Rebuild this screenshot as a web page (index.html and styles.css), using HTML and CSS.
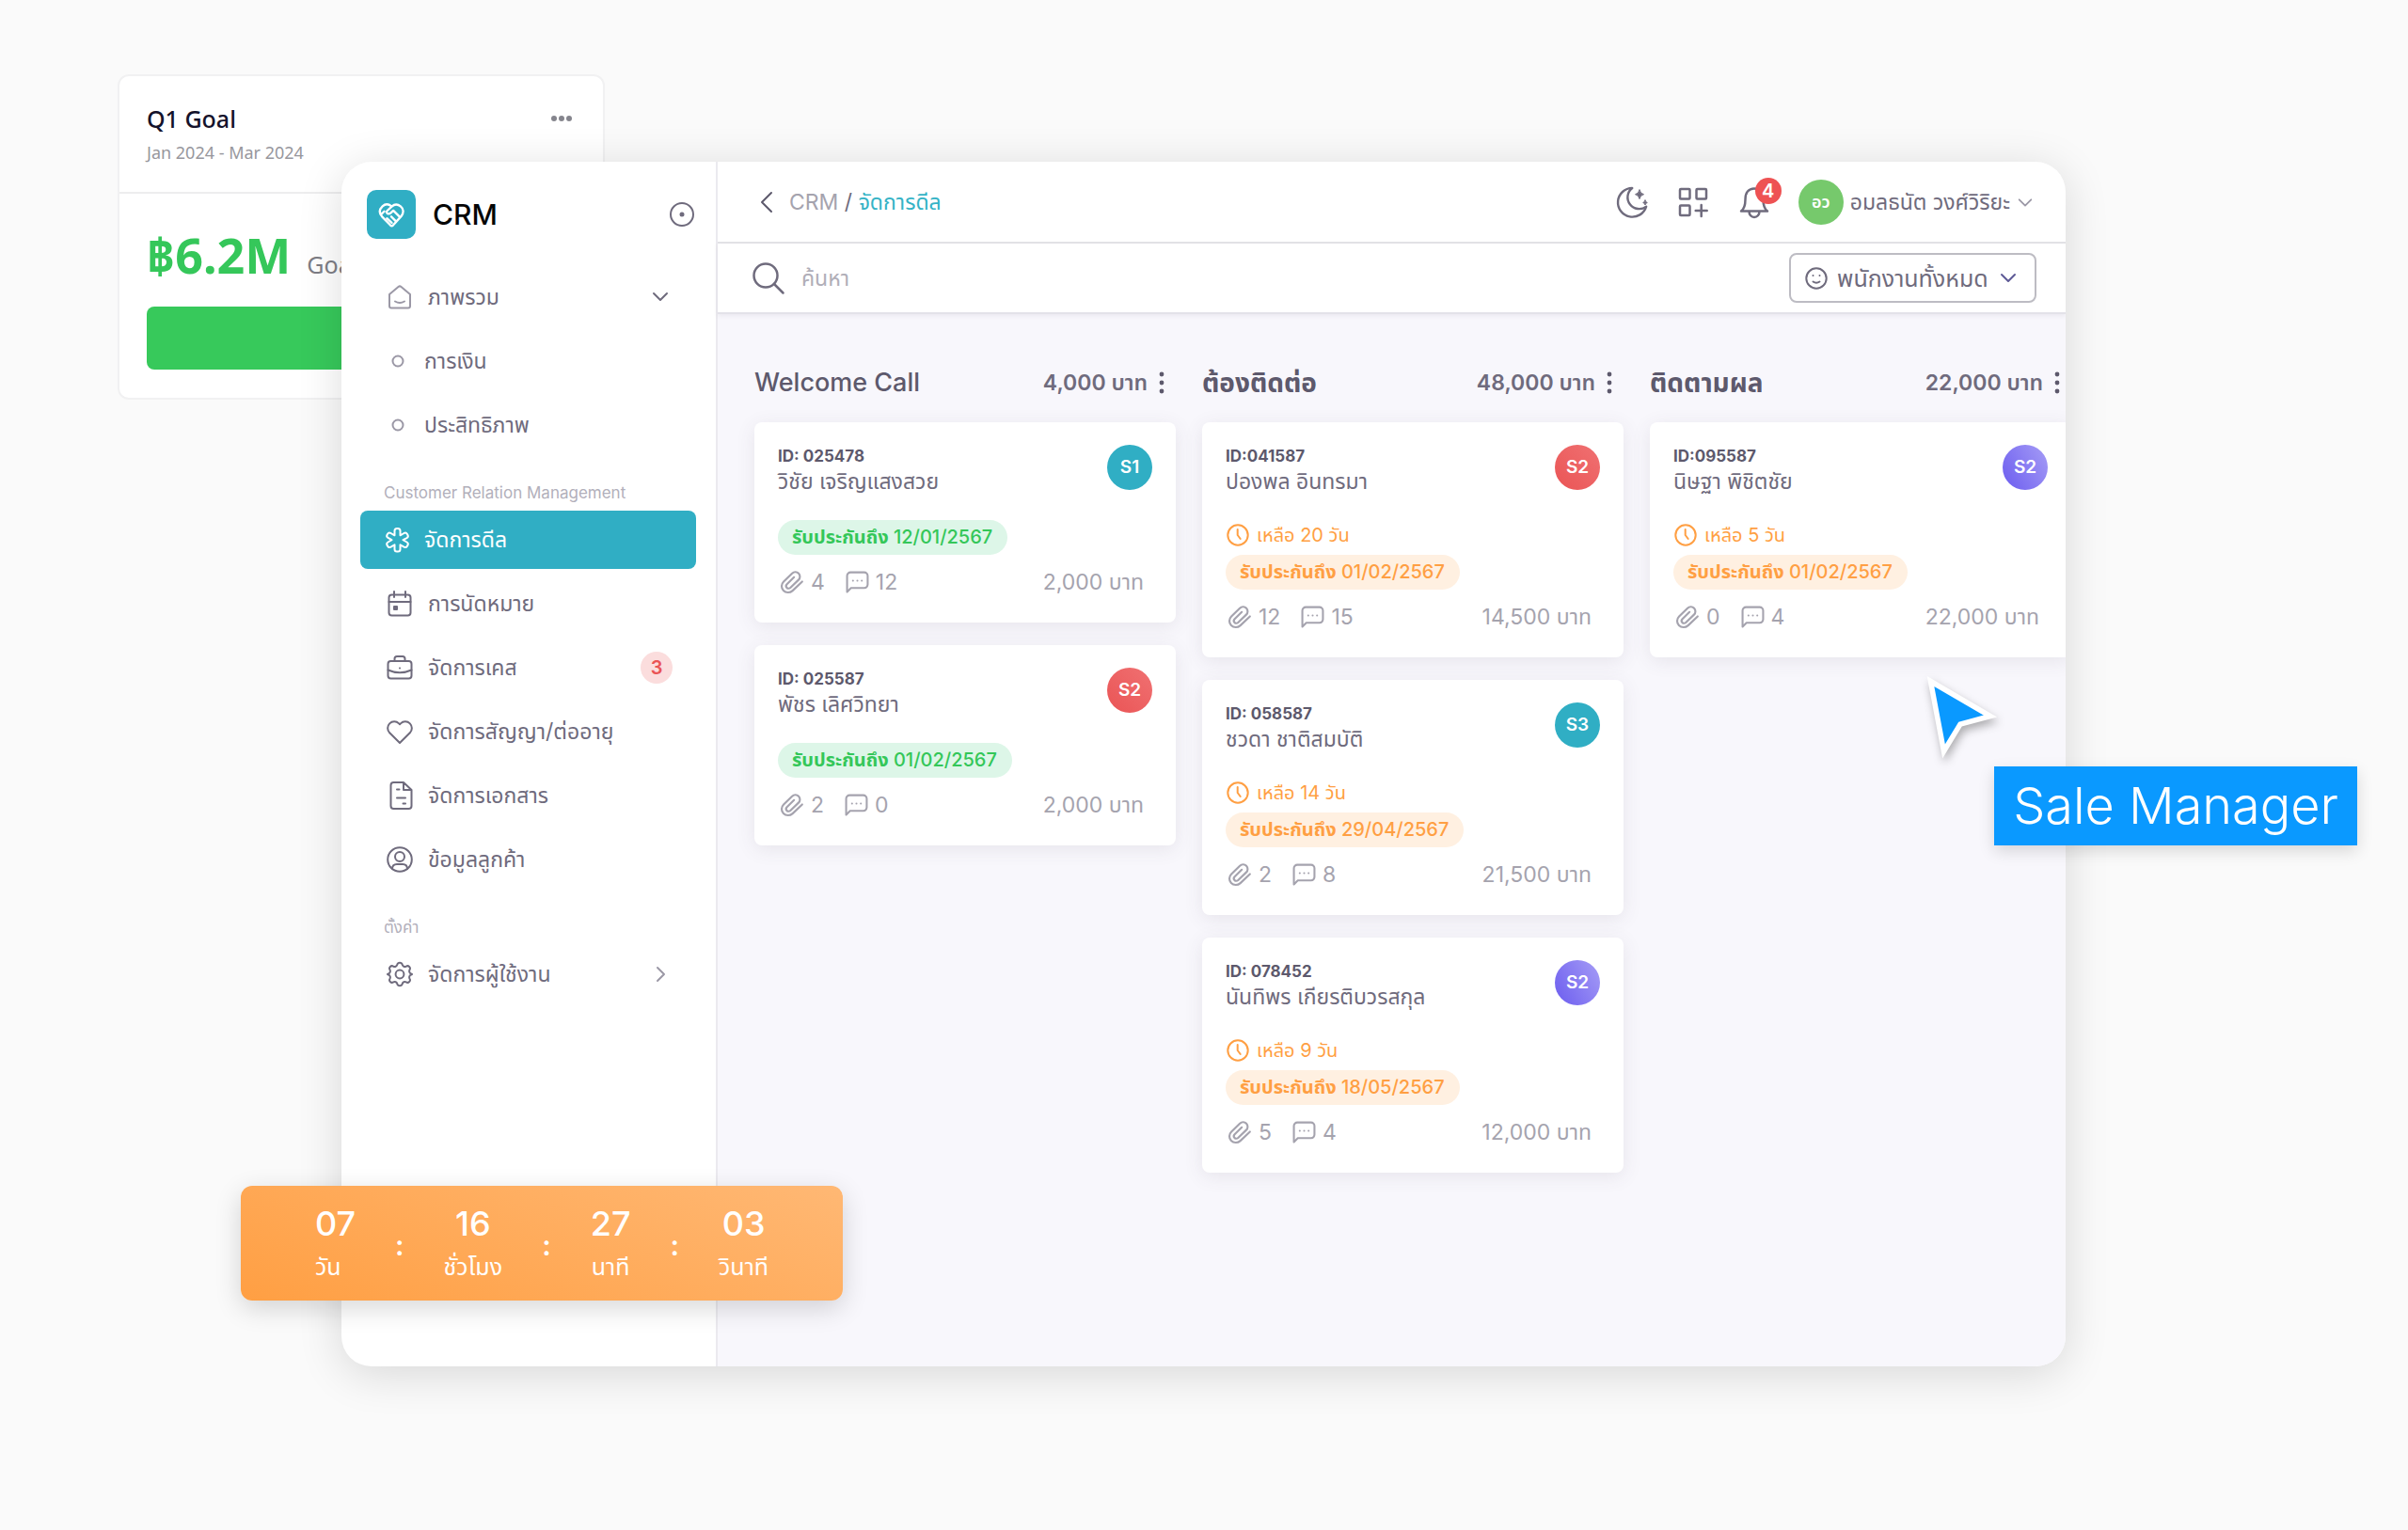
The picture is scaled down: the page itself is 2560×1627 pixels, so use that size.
FILE: index.html
```html
<!DOCTYPE html>
<html lang="th">
<head>
<meta charset="utf-8">
<meta name="viewport" content="width=device-width, initial-scale=1">
<title>CRM - จัดการดีล</title>
<link rel="stylesheet" href="styles.css">
</head>
<body>
<svg class="sprite" aria-hidden="true">
  <symbol id="i-clip" viewBox="0 0 24 24"><path d="M22 11.5 12.6 20.4c-2.6 2.4-6.6 2.4-9-.1s-2.300-6.300.2-8.800l8.300-8.100c1.800-1.700 4.700-1.700 6.400.1s1.700 4.600-.1 6.300l-8 7.700c-1 1-2.600 1-3.500 0s-.9-2.500.1-3.500l7-6.800" /></symbol>
  <symbol id="i-chat" viewBox="0 0 24 24"><path d="M1.500 22V5.500a3.500 3.500 0 0 1 3.500-3.500h14a3.500 3.500 0 0 1 3.500 3.500v9a3.500 3.500 0 0 1-3.500 3.500H5.500z" /><path d="M7.500 10.500h.01M12 10.500h.01M16.500 10.500h.01" /></symbol>
  <symbol id="i-clock" viewBox="0 0 24 24"><circle cx="12" cy="12" r="10.700" /><path d="M11.700 6v6l3 4" /></symbol>
  <symbol id="i-dots" viewBox="0 0 6 24"><circle cx="3" cy="3" r="2.400" /><circle cx="3" cy="12" r="2.400" /><circle cx="3" cy="21" r="2.400" /></symbol>
</svg>

<div class="scene">
  <section class="goal">
    <header class="goal-head">
      <div>
        <h2 class="goal-title">Q1 Goal</h2>
        <p class="goal-period">Jan 2024 - Mar 2024</p>
      </div>
      <button class="icon-button goal-more" type="button" aria-label="More">
        <svg width="24" height="8" viewBox="0 0 24 8" fill="currentColor"><circle cx="4" cy="4" r="3" /><circle cx="12" cy="4" r="3" /><circle cx="20" cy="4" r="3" /></svg>
      </button>
    </header>
    <div class="goal-body">
      <p class="goal-amount">฿6.2M<span class="goal-note">Goal</span></p>
      <div class="goal-bar"></div>
    </div>
  </section>

  <div class="window">
    <aside class="sidebar">
      <div class="brand">
        <span class="logo">
          <svg width="30" height="30" viewBox="0 0 32 32" class="stroke bold"><path d="M16 6.500C12.500 3.800 9 4 6 6.800 2 10.600 2 14.500 5.500 18.500L15 28.300q1.500 1.400 3 0L27.300 18c3.200-3.800 2.700-8.400-.8-11.200-3.300-2.700-7-2.500-10 .200l-5.300 5c-1 1-.6 2.600.6 3.100 1.500.600 3-.2 4.200-1.400l2.300-2.100 7.500 7.500M20.500 23 16 18.500M16.500 25.500 11 20.500M5 15.500 8 12.500" /></svg>
        </span>
        <span class="brand-name">CRM</span>
        <button class="icon-button" type="button" aria-label="Pin menu">
          <svg width="28" height="28" viewBox="0 0 28 28" class="stroke"><circle cx="14" cy="14" r="12" /><circle cx="14" cy="14" r="2.500" fill="currentColor" stroke="none" /></svg>
        </button>
      </div>

      <nav>
        <ul class="menu menu-overview">
          <li><a class="item" href="#">
            <svg width="28" height="28" viewBox="0 0 28 28" class="stroke faint"><path d="M3 11 12.500 3q1.500-1.200 3 0L25 11v12.500q0 2-2 2H5q-2 0-2-2zM9 18.500q5 3 10 0" /></svg>
            <span>ภาพรวม</span>
            <svg width="20" height="20" viewBox="0 0 20 20" class="stroke caret"><path d="m3 6 7 7 7-7" /></svg>
          </a></li>
          <li><a class="item item-sub" href="#"><svg width="28" height="28" viewBox="0 0 28 28" class="stroke faint"><circle cx="14" cy="14" r="5.500" /></svg><span>การเงิน</span></a></li>
          <li><a class="item item-sub" href="#"><svg width="28" height="28" viewBox="0 0 28 28" class="stroke faint"><circle cx="14" cy="14" r="5.500" /></svg><span>ประสิทธิภาพ</span></a></li>
        </ul>

        <h3 class="menu-label">Customer Relation Management</h3>
        <ul class="menu">
          <li><a class="item item-sub item-active" href="#" aria-current="page">
            <svg width="28" height="28" viewBox="0 0 28 28" class="stroke"><path d="M10.500 4.500q0-2.500 2.500-2.500h1q2.500 0 2.500 2.500v4.800l4-2.300q2.200-1.200 3.400.9l.5.800q1.200 2.200-.9 3.400L19.500 14.200l4 2.300q2.100 1.200.9 3.400l-.5.800q-1.200 2.100-3.400.9l-4-2.300v4.700q0 2.500-2.500 2.500h-1q-2.500 0-2.500-2.500v-4.700l-4 2.300q-2.200 1.200-3.400-.9l-.5-.8q-1.200-2.200.9-3.400l4-2.300-4-2.300Q1.400 10.700 2.600 8.500l.5-.8Q4.300 5.800 6.500 7l4 2.300z" /></svg>
            <span>จัดการดีล</span>
          </a></li>
          <li><a class="item" href="#">
            <svg width="28" height="28" viewBox="0 0 28 28" class="stroke"><rect x="2.500" y="4.500" width="23" height="22" rx="3" /><path d="M8 1v6M20 1v6M2.500 12h23" /><rect x="8" y="17" width="3" height="3" fill="currentColor" /></svg>
            <span>การนัดหมาย</span>
          </a></li>
          <li><a class="item" href="#">
            <svg width="28" height="28" viewBox="0 0 28 28" class="stroke"><rect x="1.500" y="7" width="25" height="18.500" rx="3" /><path d="M8.500 7V4.500Q8.500 2 11 2h6q2.500 0 2.500 2.500V7M1.500 16.500q12.500 5.500 25 0M14 14.500h.01" /></svg>
            <span>จัดการเคส</span>
            <span class="badge">3</span>
          </a></li>
          <li><a class="item" href="#">
            <svg width="28" height="28" viewBox="0 0 28 28" class="stroke"><path d="M14 26 3.200 15.300a7 7 0 0 1 0-9.900 7 7 0 0 1 9.900 0l.9.900.9-.9a7 7 0 0 1 9.900 9.900z" /></svg>
            <span>จัดการสัญญา/ต่ออายุ</span>
          </a></li>
          <li><a class="item" href="#">
            <svg width="28" height="32" viewBox="0 0 28 32" class="stroke"><path d="M18 2H7.500Q4.500 2 4.500 5v22q0 3 3 3h16q3 0 3-3V10zM18 2v8h8.500M11 9.500h2.500M11 18.500h9M17.500 24.500H20" /></svg>
            <span>จัดการเอกสาร</span>
          </a></li>
          <li><a class="item" href="#">
            <svg width="28" height="28" viewBox="0 0 28 28" class="stroke"><circle cx="14" cy="14" r="12.800" /><circle cx="14" cy="11" r="5" /><path d="M6 24q0-5 5-5h6q5 0 5 5" /></svg>
            <span>ข้อมูลลูกค้า</span>
          </a></li>
        </ul>

        <h3 class="menu-label">ตั้งค่า</h3>
        <ul class="menu">
          <li><a class="item" href="#">
            <svg width="28" height="28" viewBox="0 0 24 24" class="stroke thin"><path d="M9.700 3.300c.6-2.300 4-2.300 4.600 0a2.400 2.400 0 0 0 3.500 1.500c2.100-1.300 4.500 1.100 3.200 3.200a2.400 2.400 0 0 0 1.500 3.500c.9.200.9.800 0 1a2.400 2.400 0 0 0-1.500 3.500c1.300 2.100-1.100 4.500-3.200 3.200a2.400 2.400 0 0 0-3.500 1.500c-.6 2.300-4 2.300-4.600 0a2.400 2.400 0 0 0-3.500-1.500c-2.100 1.300-4.500-1.100-3.200-3.200a2.400 2.400 0 0 0-1.500-3.500c-.9-.2-.9-.8 0-1A2.400 2.400 0 0 0 3 8C1.700 5.900 4.100 3.500 6.200 4.800a2.400 2.400 0 0 0 3.500-1.500z" /><circle cx="12" cy="12" r="3.800" /></svg>
            <span>จัดการผู้ใช้งาน</span>
            <svg width="20" height="20" viewBox="0 0 20 20" class="stroke caret faint"><path d="m7 3 7 7-7 7" /></svg>
          </a></li>
        </ul>
      </nav>
    </aside>

    <main class="main">
      <header class="topbar">
        <button class="icon-button back" type="button" aria-label="Back">
          <svg width="20" height="24" viewBox="0 0 20 24" class="stroke"><path d="M15 2 5 12l10 10" /></svg>
        </button>
        <p class="crumbs"><a class="crumb-root" href="#">CRM</a> / <a class="crumb-here" href="#">จัดการดีล</a></p>
        <div class="tools">
          <button class="icon-button" type="button" aria-label="Dark mode">
            <svg width="36" height="36" viewBox="0 0 36 36" class="stroke bold"><path d="M18.500 2A16 16 0 1 0 34 22.500 12.500 12.500 0 0 1 18.500 2z" transform="translate(.5 1) scale(.96)" /><path d="M26 5q.8 4 4.500 4.700-3.700.8-4.500 4.800-.8-4-4.500-4.800Q25.200 9 26 5zM32 16q.4 2 2.300 2.500-1.900.4-2.300 2.500-.4-2.100-2.300-2.500Q31.600 18 32 16z" fill="currentColor" stroke-width="1" /></svg>
          </button>
          <button class="icon-button" type="button" aria-label="Shortcuts">
            <svg width="36" height="36" viewBox="0 0 36 36" class="stroke bold"><rect x="4" y="4" width="10.500" height="10.500" rx="1" /><rect x="21.500" y="4" width="10.500" height="10.500" rx="1" /><rect x="4" y="21.500" width="10.500" height="10.500" rx="1" /><path d="M26.700 21v12M20.700 27h12" /></svg>
          </button>
          <button class="icon-button bell" type="button" aria-label="Notifications">
            <svg width="36" height="36" viewBox="0 0 36 36" class="stroke bold"><path d="M4 27.500c3-2 4.500-5 4.500-12.500C8.500 8 12 3.500 18 3.500S27.500 8 27.500 15c0 7.500 1.500 10.500 4.500 12.500zM12.500 28a5.500 6 0 0 0 11 0" /></svg>
            <span class="count">4</span>
          </button>
          <button class="profile" type="button">
            <span class="avatar">อว</span>
            <span class="profile-name">อมลธนัต วงศ์วิริยะ</span>
            <svg width="18" height="18" viewBox="0 0 20 20" class="stroke faint"><path d="m3 7 7 7 7-7" /></svg>
          </button>
        </div>
      </header>

      <div class="filters">
        <label class="search">
          <svg width="36" height="36" viewBox="0 0 36 36" class="stroke bold"><circle cx="14" cy="15" r="12.500" /><path d="m23 24 9.500 9.500" /></svg>
          <input class="search-input" type="search" placeholder="ค้นหา" aria-label="ค้นหา">
        </label>
        <label class="staff">
          <svg width="24" height="24" viewBox="0 0 24 24" class="stroke"><circle cx="12" cy="12" r="10.700" /><path d="M8.500 15.500q3.500 2.500 7 0M8.500 9h.01M15.500 9h.01" /></svg>
          <select class="staff-select" aria-label="พนักงาน"><option>พนักงานทั้งหมด</option></select>
          <svg width="20" height="20" viewBox="0 0 20 20" class="stroke staff-caret"><path d="m3 6 7 7 7-7" /></svg>
        </label>
      </div>

      <div class="board">
        <section class="column">
          <header class="column-head">
            <h2 class="column-title" lang="en">Welcome Call</h2>
            <span class="column-sum">4,000 บาท</span>
            <button class="icon-button" type="button" aria-label="Column menu"><svg width="6" height="24" fill="currentColor"><use href="#i-dots" /></svg></button>
          </header>
          <article class="card">
            <div class="card-top"><div><p class="card-id">ID: 025478</p><p class="card-name">วิชัย เจริญแสงสวย</p></div><span class="stage stage-teal">S1</span></div>
            <p class="pill pill-green"><b>รับประกันถึง</b> 12/01/2567</p>
            <div class="meta">
              <span class="stat"><svg width="26" height="28" class="stroke"><use href="#i-clip" /></svg>4</span>
              <span class="stat"><svg width="25" height="26" class="stroke"><use href="#i-chat" /></svg>12</span>
              <span class="price">2,000 บาท</span>
            </div>
          </article>
          <article class="card">
            <div class="card-top"><div><p class="card-id">ID: 025587</p><p class="card-name">พัชร เลิศวิทยา</p></div><span class="stage stage-red">S2</span></div>
            <p class="pill pill-green"><b>รับประกันถึง</b> 01/02/2567</p>
            <div class="meta">
              <span class="stat"><svg width="26" height="28" class="stroke"><use href="#i-clip" /></svg>2</span>
              <span class="stat"><svg width="25" height="26" class="stroke"><use href="#i-chat" /></svg>0</span>
              <span class="price">2,000 บาท</span>
            </div>
          </article>
        </section>

        <section class="column">
          <header class="column-head">
            <h2 class="column-title">ต้องติดต่อ</h2>
            <span class="column-sum">48,000 บาท</span>
            <button class="icon-button" type="button" aria-label="Column menu"><svg width="6" height="24" fill="currentColor"><use href="#i-dots" /></svg></button>
          </header>
          <article class="card">
            <div class="card-top"><div><p class="card-id">ID:041587</p><p class="card-name">ปองพล อินทรมา</p></div><span class="stage stage-red">S2</span></div>
            <p class="left"><svg width="24" height="24" class="stroke"><use href="#i-clock" /></svg>เหลือ 20 วัน</p>
            <p class="pill pill-orange"><b>รับประกันถึง</b> 01/02/2567</p>
            <div class="meta">
              <span class="stat"><svg width="26" height="28" class="stroke"><use href="#i-clip" /></svg>12</span>
              <span class="stat"><svg width="25" height="26" class="stroke"><use href="#i-chat" /></svg>15</span>
              <span class="price">14,500 บาท</span>
            </div>
          </article>
          <article class="card">
            <div class="card-top"><div><p class="card-id">ID: 058587</p><p class="card-name">ชวดา ชาติสมบัติ</p></div><span class="stage stage-teal">S3</span></div>
            <p class="left"><svg width="24" height="24" class="stroke"><use href="#i-clock" /></svg>เหลือ 14 วัน</p>
            <p class="pill pill-orange"><b>รับประกันถึง</b> 29/04/2567</p>
            <div class="meta">
              <span class="stat"><svg width="26" height="28" class="stroke"><use href="#i-clip" /></svg>2</span>
              <span class="stat"><svg width="25" height="26" class="stroke"><use href="#i-chat" /></svg>8</span>
              <span class="price">21,500 บาท</span>
            </div>
          </article>
          <article class="card">
            <div class="card-top"><div><p class="card-id">ID: 078452</p><p class="card-name">นันทิพร เกียรติบวรสกุล</p></div><span class="stage stage-purple">S2</span></div>
            <p class="left"><svg width="24" height="24" class="stroke"><use href="#i-clock" /></svg>เหลือ 9 วัน</p>
            <p class="pill pill-orange"><b>รับประกันถึง</b> 18/05/2567</p>
            <div class="meta">
              <span class="stat"><svg width="26" height="28" class="stroke"><use href="#i-clip" /></svg>5</span>
              <span class="stat"><svg width="25" height="26" class="stroke"><use href="#i-chat" /></svg>4</span>
              <span class="price">12,000 บาท</span>
            </div>
          </article>
        </section>

        <section class="column">
          <header class="column-head">
            <h2 class="column-title">ติดตามผล</h2>
            <span class="column-sum">22,000 บาท</span>
            <button class="icon-button" type="button" aria-label="Column menu"><svg width="6" height="24" fill="currentColor"><use href="#i-dots" /></svg></button>
          </header>
          <article class="card">
            <div class="card-top"><div><p class="card-id">ID:095587</p><p class="card-name">นิษฐา พิชิตชัย</p></div><span class="stage stage-purple">S2</span></div>
            <p class="left"><svg width="24" height="24" class="stroke"><use href="#i-clock" /></svg>เหลือ 5 วัน</p>
            <p class="pill pill-orange"><b>รับประกันถึง</b> 01/02/2567</p>
            <div class="meta">
              <span class="stat"><svg width="26" height="28" class="stroke"><use href="#i-clip" /></svg>0</span>
              <span class="stat"><svg width="25" height="26" class="stroke"><use href="#i-chat" /></svg>4</span>
              <span class="price">22,000 บาท</span>
            </div>
          </article>
        </section>
      </div>
    </main>
  </div>

  <div class="timer">
    <div class="unit unit-first"><span class="unit-value">07</span><span class="unit-name">วัน</span></div>
    <span class="colon">:</span>
    <div class="unit"><span class="unit-value">16</span><span class="unit-name">ชั่วโมง</span></div>
    <span class="colon">:</span>
    <div class="unit"><span class="unit-value">27</span><span class="unit-name">นาที</span></div>
    <span class="colon">:</span>
    <div class="unit"><span class="unit-value">03</span><span class="unit-name">วินาที</span></div>
  </div>

  <svg class="cursor" width="84" height="100" viewBox="0 0 84 100"><path d="M8.500 10.500 72 47.500 40 56 22.500 85z" fill="#0a99ff" stroke="#fff" stroke-width="5.500" /></svg>
  <div class="role">Sale Manager</div>
</div>
</body>
</html>
```
FILE: styles.css
```css
* { box-sizing: border-box; }

body {
  margin: 0;
  background: #fafafa;
  color: #6f6b7d;
  font: 400 23px/30px Inter, "Noto Sans Thai", sans-serif;
}

h2, h3, p, ul { margin: 0; padding: 0; }
ul { list-style: none; }
a { color: inherit; text-decoration: none; }
svg { flex: none; display: block; }

button, input, select {
  font: inherit;
  color: inherit;
  border: 0;
  padding: 0;
  margin: 0;
  background: none;
  outline: 0;
}

.sprite { position: absolute; width: 0; height: 0; }

.stroke {
  fill: none;
  stroke: currentColor;
  stroke-width: 2;
  stroke-linecap: round;
  stroke-linejoin: round;
}
.thin { stroke-width: 1.7; }
.bold { stroke-width: 2.5; }
.faint { color: #9b98a6; }
.icon-button { display: flex; cursor: pointer; }

.scene {
  position: relative;
  display: flex;
  min-height: 100vh;
  padding: 172px 364px 174px 363px;
  overflow: hidden;
}

/* Goal card, tucked behind the window */
.goal {
  position: absolute;
  left: 125px;
  top: 79px;
  width: 518px;
  background: #fff;
  border: 2px solid #f1f1f2;
  border-radius: 12px;
  font-family: "Noto Sans", "Noto Sans Thai", sans-serif;
}
.goal-head {
  display: flex;
  justify-content: space-between;
  align-items: flex-start;
  padding: 27px 32px 28px 29px;
  border-bottom: 2px solid #ededee;
}
.goal-title { font-size: 25px; line-height: 36px; font-weight: 500; color: #14122b; }
.goal-period { padding-top: 4px; font-size: 18px; line-height: 28px; color: #97979d; }
.goal-more { padding-top: 14px; color: #85858d; }
.goal-body { padding: 33px 29px 30px; }
.goal-amount {
  display: flex;
  align-items: baseline;
  gap: 17px;
  font-size: 52px;
  line-height: 64px;
  font-weight: 700;
  color: #35c75a;
}
.goal-note { font-size: 25px; line-height: 30px; font-weight: 400; color: #7d7d85; }
.goal-bar { height: 67px; margin-top: 23px; border-radius: 8px; background: #37c95b; }

/* App window */
.window {
  position: relative;
  flex: 1;
  display: flex;
  min-width: 0;
  overflow: hidden;
  background: #fff;
  border-radius: 32px;
  box-shadow: 0 8px 48px rgba(0, 0, 0, .14);
}

.sidebar {
  flex: none;
  width: 400px;
  padding: 30px 21px 30px 20px;
  border-right: 2px solid #ebeaef;
}
.brand { display: flex; align-items: center; padding: 0 1px 0 7px; }
.logo {
  display: grid;
  place-items: center;
  width: 52px;
  height: 52px;
  margin-right: 18px;
  border-radius: 10px;
  background: #30aec4;
  color: #fff;
}
.brand-name { flex: 1; font-size: 30px; font-weight: 500; color: #050505; }

.menu { display: grid; gap: 6px; }
.menu-overview { margin-top: 31px; }
.item {
  display: flex;
  align-items: center;
  gap: 16px;
  height: 62px;
  padding: 0 25px 0 28px;
  border-radius: 8px;
}
.item-sub { padding-left: 26px; gap: 14px; }
.item-active { background: #30aec4; color: #fff; }
.caret { margin-left: auto; margin-right: 3px; }
.menu-label {
  margin: 29px 0 7px 25px;
  font-size: 17px;
  line-height: 24px;
  font-weight: 400;
  color: #b2b0bb;
}
.badge {
  width: 34px;
  height: 34px;
  margin-left: auto;
  border-radius: 50%;
  background: #fbdddd;
  color: #ea5455;
  font-size: 20px;
  line-height: 34px;
  font-weight: 600;
  text-align: center;
}

.main { flex: 1; min-width: 0; display: flex; flex-direction: column; }

.topbar {
  display: flex;
  align-items: center;
  height: 87px;
  padding: 0 34px 0 42px;
  border-bottom: 2px solid #e3e3e7;
}
.back { margin-right: 14px; color: #5d596c; }
.crumb-root { color: #a5a3ae; }
.crumb-here { color: #35b3c6; }
.tools { display: flex; align-items: center; gap: 29px; margin-left: auto; }
.bell { position: relative; }
.count {
  position: absolute;
  right: -11px;
  top: -8px;
  width: 28px;
  height: 28px;
  border-radius: 50%;
  background: #ee5253;
  color: #fff;
  font-size: 20px;
  line-height: 28px;
  font-weight: 600;
}
.profile { display: flex; align-items: center; gap: 7px; cursor: pointer; }
.avatar {
  width: 48px;
  height: 48px;
  border-radius: 50%;
  background: #76c96c;
  color: #fff;
  font-size: 18px;
  line-height: 48px;
  font-weight: 600;
  text-align: center;
}

.filters {
  position: relative;
  display: flex;
  align-items: center;
  height: 75px;
  padding: 0 31px 0 37px;
  border-bottom: 2px solid #e3e2e9;
  box-shadow: 0 2px 5px rgba(75, 70, 92, .08);
}
.search { flex: 1; display: flex; align-items: center; gap: 16px; }
.search-input { flex: 1; height: 48px; }
.search-input::placeholder { color: #b0aeb8; opacity: 1; }
.staff {
  display: flex;
  align-items: center;
  width: 263px;
  height: 53px;
  padding: 0 18px 0 15px;
  border: 2px solid #bdbcc3;
  border-radius: 8px;
}
.staff-select { flex: 1; height: 48px; margin-left: 10px; font-size: 25px; appearance: none; }
.staff-caret { color: #5e5a96; }

/* Board */
.board {
  flex: 1;
  display: flex;
  gap: 28px;
  padding: 48px 39px;
  overflow: hidden;
  background: #f8f7fc;
}
.column { flex: none; width: 448px; display: flex; flex-direction: column; gap: 24px; }
.column-head { display: flex; align-items: center; height: 50px; margin-bottom: -7px; padding-right: 12px; color: #5d596c; }
.column-title { flex: 1; font-size: 28px; font-weight: 700; }
.column-title:lang(en) { font-size: 27px; font-weight: 500; }
.column-sum { margin-right: 12px; font-weight: 600; color: #6f6b7d; }

.card {
  padding: 24px 25px 28px;
  border-radius: 8px;
  background: #fff;
  box-shadow: 0 4px 20px rgba(75, 70, 92, .1);
}
.card-top { display: flex; justify-content: space-between; margin-bottom: 26px; }
.card-id { font-size: 17px; line-height: 24px; font-weight: 700; color: #5d596c; }
.stage {
  width: 48px;
  height: 48px;
  border-radius: 50%;
  color: #fff;
  font-size: 19px;
  line-height: 48px;
  font-weight: 600;
  text-align: center;
}
.stage-teal { background: #30aec4; }
.stage-red { background: linear-gradient(45deg, #ea5455, #f07172); }
.stage-purple { background: linear-gradient(60deg, #6b5cef, #a69df6); }

.left {
  display: flex;
  align-items: center;
  gap: 8px;
  height: 32px;
  margin-bottom: 5px;
  padding-left: 1px;
  font-size: 20px;
  color: #ff9f43;
}
.pill {
  width: fit-content;
  padding: 0 16px 0 15px;
  border-radius: 19px;
  font-size: 20px;
  line-height: 37px;
  font-weight: 500;
}
.pill-green { background: #ddf6e8; color: #34c759; }
.pill-orange { background: #fff0e1; color: #ff9f43; }

.meta { display: flex; align-items: center; gap: 22px; margin-top: 14px; padding: 0 9px 0 2px; color: #a5a3ae; }
.stat { display: flex; align-items: center; gap: 7px; }
.price { margin-left: auto; }

/* Countdown */
.timer {
  position: absolute;
  left: 256px;
  bottom: 244px;
  display: flex;
  justify-content: center;
  gap: 42px;
  width: 640px;
  padding: 17px 0 13px;
  border-radius: 12px;
  background: linear-gradient(20deg, #ff9f43, #ffb874);
  box-shadow: 0 8px 28px rgba(0, 0, 0, .16);
  color: #fff;
}
.unit { display: flex; flex-direction: column; align-items: center; line-height: 46px; }
.unit-first { align-items: flex-start; }
.unit-value { font-size: 36px; font-weight: 500; }
.unit-name { font-size: 25px; }
.colon { align-self: center; font-size: 30px; font-weight: 600; }

/* Collaborator cursor */
.cursor {
  position: absolute;
  right: 432px;
  top: 714px;
  filter: drop-shadow(2px 5px 5px rgba(0, 0, 0, .3));
}
.role {
  position: absolute;
  right: 54px;
  top: 815px;
  padding: 0 20px;
  background: #0a99ff;
  box-shadow: 0 6px 16px rgba(0, 0, 0, .14);
  color: #fff;
  font-size: 54px;
  font-weight: 350;
  line-height: 84px;
}
```
